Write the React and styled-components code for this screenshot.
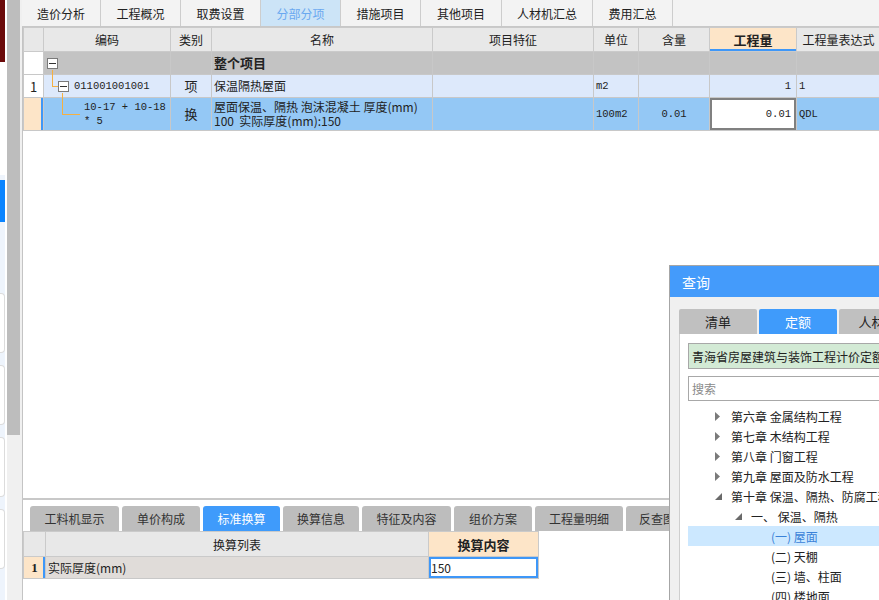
import styled, { createGlobalStyle } from 'styled-components'

const GlobalStyle = createGlobalStyle`
  html, body { margin: 0; padding: 0; }
  body {
    font-family: "Noto Sans CJK SC", "Liberation Sans", sans-serif;
    background: #fff;
    color: #222;
  }
`

const Page = styled.div`
  position: relative;
  display: flex;
  width: 879px;
  height: 600px;
  overflow: hidden;
`

// 左侧边缘（别的窗口露出来的一条）
const SideRail = styled.div`
  width: 5px;
  border-right: 2px solid #fff;
  display: flex;
  flex-direction: column;
  background: #eef4fc;
`
const RedBlock = styled.div`
  height: 62px;
  background: #6b0a0a;
`
const WhiteGap = styled.div`
  height: ${p => p.h}px;
  background: #fff;
`
const BlueMark = styled.div`
  height: 42px;
  background: #0a84ff;
  margin-top: 5px;
`
const RailCard = styled.div`
  height: 58px;
  margin-top: ${p => p.mt}px;
  background: #fff;
  border: 1px solid #dcdcdc;
  border-left: 0;
  border-radius: 0 4px 4px 0;
`

const ScrollTrack = styled.div`
  width: 15px;
  background: #f0f0f0;
`
const ScrollThumb = styled.div`
  width: 13px;
  height: 435px;
  background: #bdbdbd;
`

const Main = styled.div`
  flex: 1;
  min-width: 0;
  display: flex;
  flex-direction: column;
`

const TopTabs = styled.div`
  display: flex;
  height: 26px;
  background: #f3f3f3;
  border-bottom: 1px solid #c8c8c8;
`
const TopTab = styled.div`
  width: ${p => p.w}px;
  display: flex;
  align-items: center;
  justify-content: center;
  font-size: 12px;
  border-right: 1px solid #cdcdcd;
  box-sizing: border-box;
  color: ${p => (p.active ? '#6aa8f0' : '#222')};
  background: ${p => (p.active ? '#cce4f7' : 'transparent')};
`

const GridArea = styled.div`
  flex: 1;
  border-left: 1px solid #c4c4c4;
  overflow: hidden;
  background: #fff;
`

const Table = styled.table`
  border-collapse: collapse;
  table-layout: fixed;
  width: ${p => p.w}px;
  font-size: 12px;
`
const Th = styled.th`
  height: ${p => p.h || 23}px;
  padding: 0;
  font-size: ${p => (p.bold ? 13 : 12)}px;
  font-weight: ${p => (p.bold ? 700 : 400)};
  color: #222;
  white-space: nowrap;
  background: ${p => (p.hot ? '#fde5c8' : '#e8e8e8')};
  border: 1px solid #cacaca;
  box-shadow: ${p => (p.underline ? 'inset 0 -2px 0 #3e97f8' : 'none')};
`
const Tr = styled.tr`
  background: ${p => p.bg};
`
const Td = styled.td`
  height: ${p => p.h}px;
  padding: 0 ${p => (p.right ? 5 : 2)}px 0 2px;
  border: 1px solid #c8c8c8;
  text-align: ${p => (p.right ? 'right' : p.center ? 'center' : 'left')};
  white-space: nowrap;
  overflow: hidden;
  line-height: 14px;
  font-size: ${p => (p.big ? 13 : p.mono ? 10.5 : 12)}px;
  font-weight: ${p => (p.bold ? 700 : 400)};
  font-family: ${p => (p.mono ? '"Liberation Mono", "Noto Sans CJK SC", monospace' : 'inherit')};
`
const NumCell = styled.td`
  padding: 0;
  text-align: center;
  font-size: 13px;
  border: 1px solid #c8c8c8;
  background: ${p => (p.current ? '#fde5c8' : '#fff')};
  box-shadow: ${p => (p.current ? 'inset -2px 0 0 #3e97f8' : 'none')};
  font-family: ${p => (p.serif ? '"Liberation Serif", serif' : 'inherit')};
  font-weight: ${p => (p.serif ? 700 : 400)};
`
const EditCell = styled(Td)`
  background: #fff;
  box-shadow: inset 0 0 0 2px ${p => p.ring};
`

const CodeCell = styled.td`
  padding: 0;
  border: 1px solid #c8c8c8;
  overflow: visible;
`
const CodeLine = styled.div`
  display: flex;
  align-items: center;
  height: ${p => p.h}px;
  padding-left: ${p => p.indent}px;
`
const Elbow = styled.span`
  align-self: flex-start;
  flex: none;
  width: ${p => p.w}px;
  height: ${p => p.h}px;
  margin-top: -5px;
  border-left: 1px solid #f5b041;
  border-bottom: 1px solid #f5b041;
`
const FoldBox = styled.span`
  flex: none;
  width: 9px;
  height: 9px;
  border: 1px solid #7a7a7a;
  background: #fff;
  display: flex;
  align-items: center;
  justify-content: center;
  &::after {
    content: '';
    width: 7px;
    height: 1px;
    background: #333;
  }
`
const CodeText = styled.span`
  margin-left: ${p => p.ml}px;
  font-family: "Liberation Mono", monospace;
  font-size: 10.5px;
  line-height: 14px;
  white-space: nowrap;
`

const BottomPanel = styled.div`
  height: 94px;
  border-top: 2px solid #c8c8c8;
  padding-top: 6px;
  border-left: 1px solid #c4c4c4;
  background: #fff;
`
const BottomTabs = styled.div`
  display: flex;
  gap: 3px;
  height: 25px;
  padding-left: 7px;
`
const BottomTab = styled.div`
  flex: none;
  width: ${p => p.w}px;
  border-radius: 3px 3px 0 0;
  display: flex;
  align-items: center;
  justify-content: center;
  font-size: 12px;
  white-space: nowrap;
  overflow: hidden;
  color: ${p => (p.active ? '#fff' : '#333')};
  background: ${p => (p.active ? '#3f9bfb' : '#bdbdbd')};
`

// 查询窗口，浮在页面之上
const Dialog = styled.div`
  position: absolute;
  left: 669px;
  top: 265px;
  width: 240px;
  height: 340px;
  border: 1px solid #a6a6a6;
  background: #f0f0f0;
  display: flex;
  flex-direction: column;
`
const DialogTitle = styled.div`
  height: 31px;
  background: #449bfb;
  color: #fff;
  font-size: 14px;
  display: flex;
  align-items: center;
  padding-left: 12px;
`
const DialogBody = styled.div`
  flex: 1;
  display: flex;
  flex-direction: column;
  padding: 12px 0 0 9px;
`
const DialogTabs = styled.div`
  display: flex;
  gap: 2px;
  height: 25px;
`
const DialogTab = styled.div`
  flex: none;
  width: 78px;
  border-radius: 2px 2px 0 0;
  display: flex;
  align-items: center;
  justify-content: center;
  font-size: 13px;
  color: ${p => (p.active ? '#fff' : '#222')};
  background: ${p => (p.active ? '#3f9bfb' : '#c0c0c0')};
  white-space: nowrap;
  overflow: hidden;
`
const DialogContent = styled.div`
  flex: 1;
  background: #fff;
  border-left: 1px solid #cfcfcf;
  padding: 9px 0 0 8px;
  display: flex;
  flex-direction: column;
`
const LibraryBox = styled.div`
  height: 24px;
  background: #d3ead5;
  border: 1px solid #a8a8a8;
  display: flex;
  align-items: center;
  padding-left: 3px;
  font-size: 12px;
  white-space: nowrap;
  overflow: hidden;
`
const SearchBox = styled.div`
  height: 23px;
  margin-top: 7px;
  border: 1px solid #a8a8a8;
  display: flex;
  align-items: center;
  padding-left: 3px;
  font-size: 12px;
  color: #8a8a8a;
`
const Tree = styled.div`
  margin-top: 5px;
  display: flex;
  flex-direction: column;
`
const TreeRow = styled.div`
  height: 20px;
  display: flex;
  align-items: center;
  padding-left: ${p => p.indent}px;
  font-size: 12px;
  white-space: nowrap;
  color: ${p => (p.selected ? '#3a82d8' : '#222')};
  background: ${p => (p.selected ? '#cce8ff' : 'transparent')};
`
const Caret = styled.span`
  width: 16px;
  flex: none;
  display: flex;
  align-items: center;
`

const CaretIcon = ({ open }) =>
  open ? (
    <svg width="7" height="7" viewBox="0 0 7 7">
      <path d="M7 0V7H0Z" fill="#6a6a6a" />
    </svg>
  ) : (
    <svg width="5" height="9" viewBox="0 0 5 9">
      <path d="M0 0L5 4.5L0 9Z" fill="#7a7a7a" />
    </svg>
  )

const topTabs = [
  ['造价分析', 79], ['工程概况', 80], ['取费设置', 80], ['分部分项', 80],
  ['措施项目', 80], ['其他项目', 81], ['人材机汇总', 91], ['费用汇总', 80],
]
const bottomTabs = [
  ['工料机显示', 89], ['单价构成', 78], ['标准换算', 77], ['换算信息', 76],
  ['特征及内容', 89], ['组价方案', 78], ['工程量明细', 88], ['反查图形工程量', 110],
]
const cols = [20, 127, 41, 221, 161, 45, 71, 87, 84]
const treeItems = [
  { text: '第六章 金属结构工程', indent: 27, caret: 'closed' },
  { text: '第七章 木结构工程', indent: 27, caret: 'closed' },
  { text: '第八章 门窗工程', indent: 27, caret: 'closed' },
  { text: '第九章 屋面及防水工程', indent: 27, caret: 'closed' },
  { text: '第十章 保温、隔热、防腐工程', indent: 27, caret: 'open' },
  { text: '一、 保温、隔热', indent: 47, caret: 'open' },
  { text: '(一) 屋面', indent: 83, selected: true },
  { text: '(二) 天棚', indent: 83 },
  { text: '(三) 墙、柱面', indent: 83 },
  { text: '(四) 楼地面', indent: 83 },
]

export default function App() {
  return (
    <>
      <GlobalStyle />
      <Page>
        <SideRail>
          <RedBlock />
          <WhiteGap h={113} />
          <BlueMark />
          <RailCard mt={71} />
          <RailCard mt={12} />
          <RailCard mt={12} />
          <RailCard mt={12} />
        </SideRail>
        <ScrollTrack>
          <ScrollThumb />
        </ScrollTrack>

        <Main>
          <TopTabs>
            {topTabs.map(([name, w]) => (
              <TopTab key={name} w={w} active={name === '分部分项'}>{name}</TopTab>
            ))}
          </TopTabs>

          <GridArea>
            <Table w={857}>
              <colgroup>
                {cols.map((w, i) => <col key={i} style={{ width: w }} />)}
              </colgroup>
              <thead>
                <tr>
                  <Th h={23} />
                  <Th>编码</Th>
                  <Th>类别</Th>
                  <Th>名称</Th>
                  <Th>项目特征</Th>
                  <Th>单位</Th>
                  <Th>含量</Th>
                  <Th hot bold underline>工程量</Th>
                  <Th>工程量表达式</Th>
                </tr>
              </thead>
              <tbody>
                <Tr bg="#c3c3c3">
                  <NumCell />
                  <CodeCell>
                    <CodeLine h={22} indent={3}>
                      <FoldBox />
                    </CodeLine>
                  </CodeCell>
                  <Td />
                  <Td big bold>整个项目</Td>
                  <Td /><Td /><Td /><Td /><Td />
                </Tr>
                <Tr bg="#dde9fb">
                  <NumCell>1</NumCell>
                  <CodeCell>
                    <CodeLine h={22} indent={8}>
                      <Elbow w={5} h={16} />
                      <FoldBox />
                      <CodeText ml={5}>011001001001</CodeText>
                    </CodeLine>
                  </CodeCell>
                  <Td center big>项</Td>
                  <Td>保温隔热屋面</Td>
                  <Td />
                  <Td mono>m2</Td>
                  <Td />
                  <Td right mono>1</Td>
                  <Td mono>1</Td>
                </Tr>
                <Tr bg="#94c8f5">
                  <NumCell current />
                  <CodeCell>
                    <CodeLine h={32} indent={18}>
                      <Elbow w={17} h={21} />
                      <CodeText ml={4}>10-17 + 10-18<br />* 5</CodeText>
                    </CodeLine>
                  </CodeCell>
                  <Td center big>换</Td>
                  <Td>屋面保温、隔热 泡沫混凝土 厚度(mm)<br />100&nbsp;&nbsp;实际厚度(mm):150</Td>
                  <Td />
                  <Td mono>100m2</Td>
                  <Td center mono>0.01</Td>
                  <EditCell right mono ring="#808080">0.01</EditCell>
                  <Td mono>QDL</Td>
                </Tr>
              </tbody>
            </Table>
          </GridArea>

          <BottomPanel>
            <BottomTabs>
              {bottomTabs.map(([name, w]) => (
                <BottomTab key={name} w={w} active={name === '标准换算'}>{name}</BottomTab>
              ))}
            </BottomTabs>
            <Table w={515}>
              <colgroup>
                <col style={{ width: 22 }} />
                <col style={{ width: 383 }} />
                <col style={{ width: 110 }} />
              </colgroup>
              <thead>
                <tr>
                  <Th h={24} />
                  <Th>换算列表</Th>
                  <Th hot bold>换算内容</Th>
                </tr>
              </thead>
              <tbody>
                <Tr bg="#e0dcd9">
                  <NumCell current serif>1</NumCell>
                  <Td h={21}>实际厚度(mm)</Td>
                  <EditCell ring="#3e97f8">150</EditCell>
                </Tr>
              </tbody>
            </Table>
          </BottomPanel>
        </Main>

        <Dialog>
          <DialogTitle>查询</DialogTitle>
          <DialogBody>
            <DialogTabs>
              <DialogTab>清单</DialogTab>
              <DialogTab active>定额</DialogTab>
              <DialogTab>人材机</DialogTab>
            </DialogTabs>
            <DialogContent>
              <LibraryBox>青海省房屋建筑与装饰工程计价定额(2020)</LibraryBox>
              <SearchBox>搜索</SearchBox>
              <Tree>
                {treeItems.map(item => (
                  <TreeRow key={item.text} indent={item.indent} selected={item.selected}>
                    {item.caret && (
                      <Caret><CaretIcon open={item.caret === 'open'} /></Caret>
                    )}
                    {item.text}
                  </TreeRow>
                ))}
              </Tree>
            </DialogContent>
          </DialogBody>
        </Dialog>
      </Page>
    </>
  )
}
